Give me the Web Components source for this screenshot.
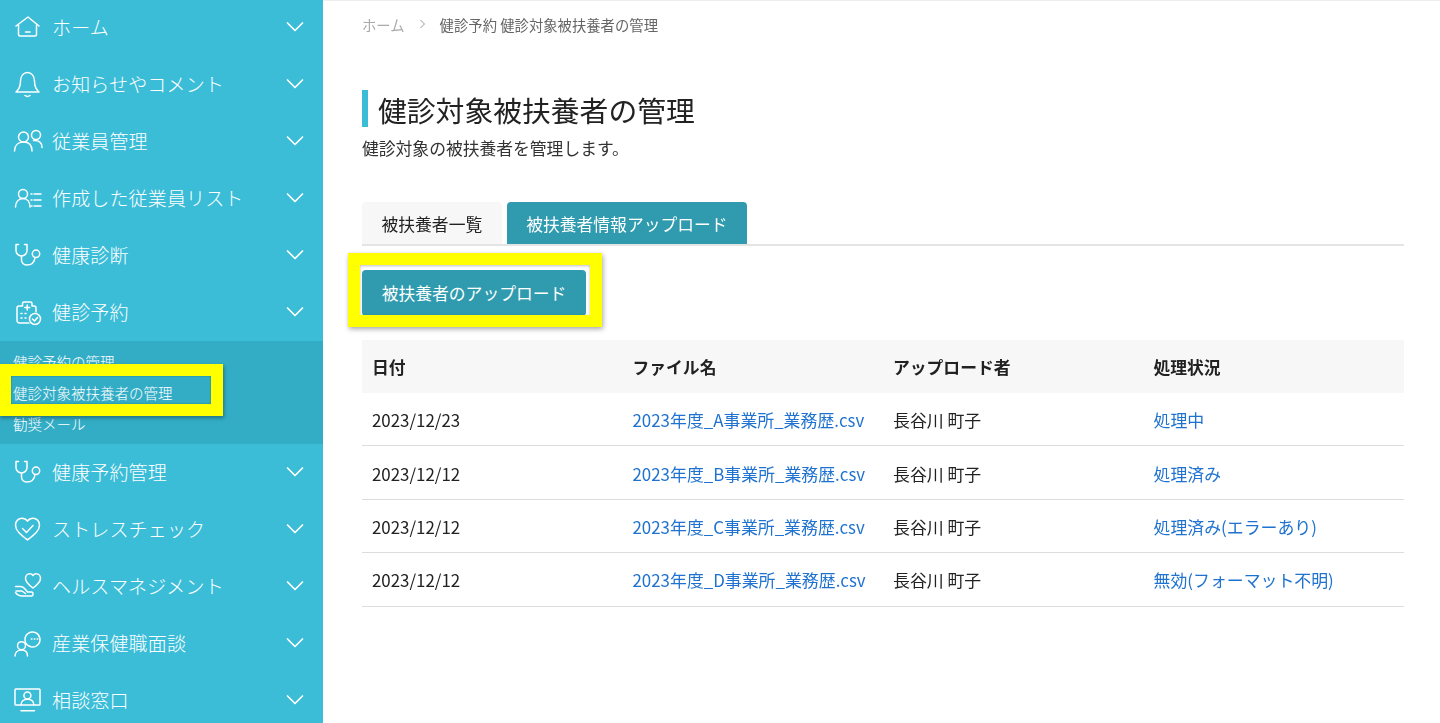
<!DOCTYPE html>
<html lang="ja">
<head>
<meta charset="utf-8">
<title>健診対象被扶養者の管理</title>
<style>
	html, body { margin: 0; height: 100%; overflow: hidden; background: #fff; }
	body { font-family: "Noto Sans CJK JP", "Noto Sans", sans-serif; color: #222; }
</style>
</head>
<body>
<app-shell>
	<side-bar slot="side">
		<nav-item icon="home">ホーム</nav-item>
		<nav-item icon="bell">お知らせやコメント</nav-item>
		<nav-item icon="users">従業員管理</nav-item>
		<nav-item icon="list">作成した従業員リスト</nav-item>
		<nav-item icon="scope">健康診断</nav-item>
		<nav-item icon="clinic">健診予約</nav-item>
		<sub-menu>
			<sub-item>健診予約の管理</sub-item>
			<sub-item>健診対象被扶養者の管理</sub-item>
			<sub-item>勧奨メール</sub-item>
			<mark-box style="left:-1px;top:23px;width:200px;height:28px"></mark-box>
		</sub-menu>
		<nav-item icon="scope">健康予約管理</nav-item>
		<nav-item icon="heart">ストレスチェック</nav-item>
		<nav-item icon="hand">ヘルスマネジメント</nav-item>
		<nav-item icon="chat">産業保健職面談</nav-item>
		<nav-item icon="screen">相談窓口</nav-item>
	</side-bar>
	<bread-crumb><span>ホーム</span><span>健診予約 健診対象被扶養者の管理</span></bread-crumb>
	<page-title sub="健診対象の被扶養者を管理します。">健診対象被扶養者の管理</page-title>
	<tab-bar>
		<tab-item>被扶養者一覧</tab-item>
		<tab-item active>被扶養者情報アップロード</tab-item>
	</tab-bar>
	<upload-button>被扶養者のアップロード</upload-button>
	<file-table>
		<file-row head date="日付" file="ファイル名" user="アップロード者" status="処理状況"></file-row>
		<file-row date="2023/12/23" file="2023年度_A事業所_業務歴.csv" user="長谷川 町子" status="処理中"></file-row>
		<file-row date="2023/12/12" file="2023年度_B事業所_業務歴.csv" user="長谷川 町子" status="処理済み"></file-row>
		<file-row date="2023/12/12" file="2023年度_C事業所_業務歴.csv" user="長谷川 町子" status="処理済み(エラーあり)"></file-row>
		<file-row date="2023/12/12" file="2023年度_D事業所_業務歴.csv" user="長谷川 町子" status="無効(フォーマット不明)"></file-row>
	</file-table>
</app-shell>

<script>
(function() {
	// stroke paths for the sidebar icons, 30x30 box
	const ICONS = {
		home: `<path d="M3 14 15 5l11 9"/><path d="M5.500 13v9.500a1.500 1.500 0 0 0 1.500 1.500h15a1.500 1.500 0 0 0 1.500-1.500V13"/><path d="M12.500 20h4.500"/>`,
		bell: `<path d="M3 23c3-2.500 4.500-5.500 4.500-11 0-5 3-8.500 7-8.500s7 3.500 7 8.500c0 5.500 1.500 8.500 4.500 11z"/><path d="M12 26.500q2.500 1.800 5 0"/>`,
		users: `<circle cx="10.500" cy="11" r="5"/><circle cx="23" cy="9" r="4.500"/><path d="M1.500 25c0-5.500 3.500-9 9-9s8.500 3.500 8.500 9"/><path d="M20.500 14.500c5 -.5 8.500 2 8.500 7"/>`,
		list: `<circle cx="10" cy="11" r="4.500"/><path d="M2.500 24c0-5 3-8.500 7.500-8.500s7 3.500 7 8.500"/><path d="M21 11h7M21 17h7M21 23h7"/><path d="M18 11h1M18 17h1M18 23h1"/>`,
		scope: `<path d="M5.500 4.500H3v6a5.500 5.500 0 0 0 11 0v-6h-2.500"/><path d="M8.500 16v4a5 5 0 0 0 5 5c4 0 8-2 8.500-7.500"/><circle cx="23" cy="13.800" r="3.700"/>`,
		clinic: `<path d="M16 26H6.500A2.500 2.500 0 0 1 4 23.500V11a2 2 0 0 1 2-2h3.500V6.500A1.500 1.500 0 0 1 11 5h6.500A1.500 1.500 0 0 1 19 6.500V9h2a2 2 0 0 1 2 2v4"/><path d="M14.200 8v5M11.700 10.500h5"/><path d="M8 16.500h1M12 16.500h1M8 21h1M12 21h1"/><circle cx="22" cy="22" r="5.500"/><path d="m19.500 22 2 2 3-3.500"/>`,
		heart: `<path d="M14.500 26C8 21 2.500 17 2.500 11c0-4 3-6.800 6.500-6.800 2.500 0 4.300 1.200 5.500 3 1.200-1.800 3-3 5.500-3 3.500 0 6.500 2.800 6.500 6.800 0 6-5.500 10-12 15z"/><path d="m9.500 14.500 4 4 6.500-7"/>`,
		hand: `<path d="M20 17c-4-3-7.500-5.500-7.500-9.500 0-2.700 2-4.800 4.300-4.800 1.400 0 2.500.7 3.200 1.800.7-1.100 1.800-1.800 3.200-1.800 2.300 0 4.300 2.100 4.300 4.800 0 4-3.500 6.500-7.500 9.500z"/><path d="M2.500 15.500H7.500c2 0 3.500 1 5 3l2 2.500h4c2 0 2 4 0 4H9c-3 0-5-1.500-6.500-3.500"/><path d="M3 20h6l3.500 2.500"/>`,
		chat: `<circle cx="8.500" cy="17.700" r="4"/><path d="M2 28c0-3.500 2.500-6 6.500-6s6 2.500 6 6"/><path d="M15 17.500a7.500 7.500 0 1 1 2.800 1.300z"/><path d="M18.300 11h.6M21.200 11h.6M24.100 11h.6"/>`,
		screen: `<rect x="2" y="4" width="25" height="16" rx=".8"/><circle cx="14.400" cy="10.500" r="3.500"/><path d="M8 20c0-3.600 2.500-5.800 6.400-5.800s6.400 2.200 6.400 5.800"/><path d="M8 25.700h13.500"/>`
	};

	function tpl(html) {
		let t = document.createElement("template");
		t.innerHTML = html;
		return t;
	}

	class Base extends HTMLElement {
		constructor() {
			super();
			this.attachShadow({mode: "open"});
			this.shadowRoot.appendChild(this.constructor.template.content.cloneNode(true));
		}
	}

	class AppShell extends Base {
		static template = tpl(`
			<style>
				:host { display: grid; grid-template-columns: 323px 1fr; height: 723px; overflow: hidden; filter: blur(.45px); }
				main { border-top: 1px solid #eee; padding: 0 36px 0 39px; min-width: 0; position: relative; }
			</style>
			<slot name="side"></slot>
			<main><slot></slot></main>
		`);
	}

	class SideBar extends Base {
		static template = tpl(`
			<style>
				:host { display: block; background: #3bbdd8; height: 723px; overflow: visible; }
				div { margin-top: -1.500px; }
			</style>
			<div><slot></slot></div>
		`);
	}

	class NavItem extends Base {
		static template = tpl(`
			<style>
				:host { display: flex; align-items: center; height: 57px; color: #fff; font-size: 19px; font-weight: 300; letter-spacing: .15px; padding-left: 13px; box-sizing: border-box; }
				svg.ic { width: 30px; height: 30px; flex: none; fill: none; stroke: #fff; stroke-width: 1.500; stroke-linecap: round; stroke-linejoin: round; }
				span { margin-left: 9px; flex: 1; white-space: nowrap; margin-top: -2px; }
				svg.ch { width: 18px; height: 12px; flex: none; margin-right: 19px; margin-top: 0; fill: none; stroke: #fff; stroke-width: 1.700; stroke-linecap: round; stroke-linejoin: round; }
			</style>
			<svg class="ic" viewBox="0 0 30 30"></svg>
			<span><slot></slot></span>
			<svg class="ch" viewBox="0 0 18 12"><path d="m1.500 2 7.500 7.500L16.500 2"/></svg>
		`);
		connectedCallback() {
			this.shadowRoot.querySelector(".ic").innerHTML = ICONS[this.getAttribute("icon")] || "";
		}
	}

	class SubMenu extends Base {
		static template = tpl(`
			<style>
				:host { display: block; position: relative; background: #33adc6; height: 103px; padding-top: 5px; box-sizing: border-box; }
			</style>
			<slot></slot>
		`);
	}

	class SubItem extends Base {
		static template = tpl(`
			<style>
				:host { display: flex; align-items: center; height: 31px; padding-left: 13px; color: #fff; font-size: 14.500px; font-weight: 300; white-space: nowrap; }
			</style>
			<slot></slot>
		`);
	}

	// yellow annotation frame drawn over the screenshot
	class MarkBox extends Base {
		static template = tpl(`
			<style>
				:host { display: block; position: absolute; border: 12px solid #ffff00; box-shadow: 1px 2px 4px rgba(0,0,0,.35), inset 0 0 2px rgba(0,0,0,.3); z-index: 2; }
			</style>
		`);
	}

	class BreadCrumb extends Base {
		static template = tpl(`
			<style>
				:host { display: flex; align-items: center; height: 46px; font-size: 14.350px; color: #666; }
				::slotted(span:first-child) { color: #aaa; }
				svg { width: 8px; height: 10px; margin: 0 13px 0 14px; fill: none; stroke: #999; stroke-width: 1; }
			</style>
			<slot name="a"></slot>
			<svg viewBox="0 0 8 10"><path d="m1.500 1 4 4-4 4"/></svg>
			<slot></slot>
		`);
		connectedCallback() {
			this.firstElementChild.slot = "a";
		}
	}

	class PageTitle extends Base {
		static template = tpl(`
			<style>
				:host { display: block; margin-top: 43px; }
				h1 { margin: 0; height: 37px; display: flex; align-items: center; border-left: 6px solid #3bbdd8; padding-left: 10px; font-size: 28.800px; font-weight: 400; color: #222; white-space: nowrap; }
				h1 span { margin-top: 1px; }
				p { margin: 9px 0 0; font-size: 16.800px; line-height: 24px; color: #333; }
			</style>
			<h1><span><slot></slot></span></h1>
			<p></p>
		`);
		connectedCallback() {
			this.shadowRoot.querySelector("p").textContent = this.getAttribute("sub");
		}
	}

	class TabBar extends Base {
		static template = tpl(`
			<style>
				:host { display: flex; gap: 5px; margin-top: 42px; height: 42px; border-bottom: 2px solid #e4e4e4; width: 1042px; }
			</style>
			<slot></slot>
		`);
	}

	class TabItem extends Base {
		static template = tpl(`
			<style>
				:host { display: flex; align-items: center; padding: 2px 19.500px 0; font-size: 16.800px; background: #f7f7f7; color: #222; border-radius: 4px 4px 0 0; white-space: nowrap; }
				:host([active]) { background: #309bae; color: #fff; }
			</style>
			<slot></slot>
		`);
	}

	class UploadButton extends Base {
		static template = tpl(`
			<style>
				:host { display: block; position: relative; width: 224px; height: 46px; margin-top: 24px; background: #309bae; color: #fff; font-size: 16.800px; border-radius: 4px; text-align: center; line-height: 47px; white-space: nowrap; }
				i { position: absolute; left: -14px; top: -17px; width: 230px; height: 50px; border: 12px solid #ffff00; box-shadow: 1px 2px 5px rgba(0,0,0,.35), inset 0 1px 3px rgba(0,0,0,.25); pointer-events: none; }
			</style>
			<slot></slot><i></i>
		`);
	}

	class FileTable extends Base {
		static template = tpl(`
			<style>
				:host { display: block; width: 1042px; margin-top: 24px; }
			</style>
			<slot></slot>
		`);
	}

	class FileRow extends Base {
		static template = tpl(`
			<style>
				:host { display: grid; grid-template-columns: repeat(4, 260.500px); align-items: center; height: 53.400px; box-sizing: border-box; border-bottom: 1.500px solid #ddd; padding-top: 1px; font-size: 16.900px; color: #222; padding-left: 10px; white-space: nowrap; }
				:host([head]) { background: #f7f7f7; border-bottom: 0; padding-top: 0; font-weight: 700; font-size: 16.800px; height: 53px; }
				.link { color: #1f72cf; }
				:host([head]) .link { color: #222; }
			</style>
			<span id="date"></span><span id="file" class="link"></span><span id="user"></span><span id="status" class="link"></span>
		`);
		connectedCallback() {
			for (let k of ["date", "file", "user", "status"]) {
				this.shadowRoot.getElementById(k).textContent = this.getAttribute(k);
			}
		}
	}

	customElements.define("app-shell", AppShell);
	customElements.define("side-bar", SideBar);
	customElements.define("nav-item", NavItem);
	customElements.define("sub-menu", SubMenu);
	customElements.define("sub-item", SubItem);
	customElements.define("mark-box", MarkBox);
	customElements.define("bread-crumb", BreadCrumb);
	customElements.define("page-title", PageTitle);
	customElements.define("tab-bar", TabBar);
	customElements.define("tab-item", TabItem);
	customElements.define("upload-button", UploadButton);
	customElements.define("file-table", FileTable);
	customElements.define("file-row", FileRow);
})();
</script>
</body>
</html>
